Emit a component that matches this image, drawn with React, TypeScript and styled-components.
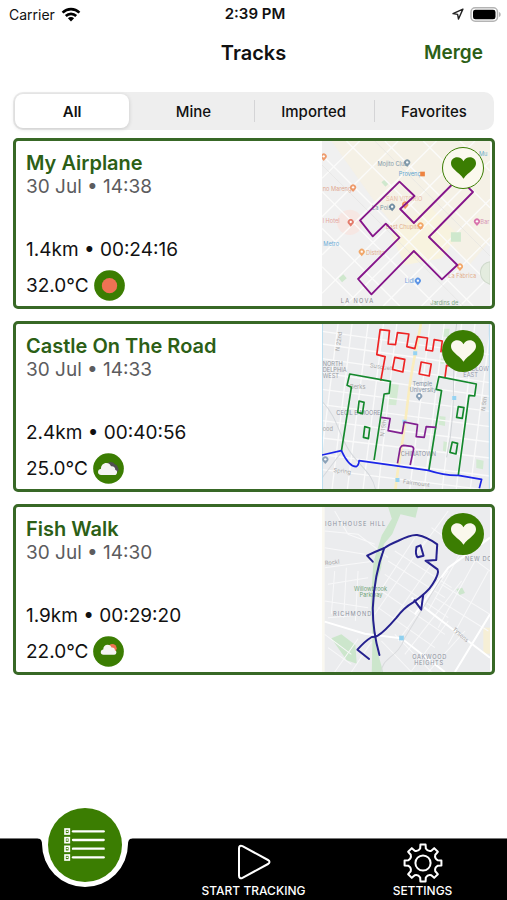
import React, { useState } from "react";
import styled, { createGlobalStyle, css } from "styled-components";

const colors = {
  leaf: "#3b7d02",
  forest: "#2c5f16",
  text: "#111111",
  muted: "#5c5c5e",
  segment: "#eeeeee",
};

const GlobalStyle = createGlobalStyle`
  *, *::before, *::after { box-sizing: border-box; }
  body {
    margin: 0;
    background: #ffffff;
    color: ${colors.text};
    font-family: Inter, "Liberation Sans", sans-serif;
  }
  button { font: inherit; color: inherit; border: 0; padding: 0; background: none; cursor: pointer; }
  a { color: inherit; text-decoration: none; }
  h1, h2, p { margin: 0; }
  svg { display: block; }
`;

const Screen = styled.div`
  display: flex;
  flex-direction: column;
  min-height: 100vh;
`;

const StatusBar = styled.div`
  display: grid;
  grid-template-columns: 1fr auto 1fr;
  align-items: center;
  height: 28px;
  padding: 0 6px 0 9px;
  font-size: 14px;
`;

const StatusGroup = styled.div<{ $end?: boolean }>`
  display: flex;
  align-items: center;
  gap: 6px;
  justify-content: ${(p) => (p.$end ? "flex-end" : "flex-start")};
`;

const Clock = styled.time`
  font-size: 15px;
  line-height: 20px;
  font-weight: 600;
`;

const NavBar = styled.header`
  display: grid;
  grid-template-columns: 1fr auto 1fr;
  align-items: center;
  height: 50px;
  padding: 0 24px;
`;

const NavTitle = styled.h1`
  grid-column: 2;
  font-size: 20px;
  line-height: 24px;
  font-weight: 600;
`;

const NavAction = styled.button`
  justify-self: end;
  font-size: 19px;
  line-height: 24px;
  font-weight: 600;
  color: ${colors.forest};
`;

const Segments = styled.div`
  display: grid;
  grid-template-columns: repeat(4, 1fr);
  margin: 14px 13px 0;
  height: 38px;
  border-radius: 10px;
  background: ${colors.segment};
`;

const Segment = styled.button<{ $active: boolean; $divided: boolean }>`
  position: relative;
  border-radius: 8px;
  font-size: 15px;
  font-weight: 500;
  ${(p) =>
    p.$active &&
    css`
      margin: 2px 4px 2px 2px;
      background: #ffffff;
      font-weight: 600;
      box-shadow: 0 1px 4px rgba(0, 0, 0, 0.16);
    `}
  ${(p) =>
    p.$divided &&
    css`
      &::before {
        content: "";
        position: absolute;
        left: 0;
        top: 8px;
        bottom: 8px;
        width: 1px;
        background: #d4d4d6;
      }
    `}
`;

const TrackList = styled.main`
  display: flex;
  flex-direction: column;
  flex: 1;
  gap: 12px;
  padding: 8px 12px 64px 13px;
`;

const Card = styled.article`
  display: flex;
  border: 3px solid #386826;
  border-radius: 5px;
  padding-right: 2px;
`;

const CardBody = styled.div`
  display: flex;
  flex-direction: column;
  flex: 1;
  padding: 10px 10px 5px;
`;

const TrackName = styled.h2`
  font-size: 20px;
  line-height: 24px;
  font-weight: 600;
  color: ${colors.forest};
`;

const Line = styled.p<{ $muted?: boolean }>`
  font-size: 19px;
  line-height: 24px;
  color: ${(p) => (p.$muted ? colors.muted : colors.text)};
`;

const Metrics = styled.div`
  margin-top: auto;
  display: flex;
  flex-direction: column;
  gap: 8px;
`;

const Weather = styled.div`
  display: flex;
  align-items: center;
  gap: 5px;
`;

const MapFrame = styled.div`
  position: relative;
  flex: 0 0 168px;
  height: 165px;
`;

const MapSvg = styled.svg`
  width: 100%;
  height: 100%;
`;

const Label = styled.text`
  font-family: Inter, "Liberation Sans", sans-serif;
  font-size: 17px;
`;

const FavoriteButton = styled.button<{ $filled: boolean }>`
  position: absolute;
  top: 6px;
  right: 6px;
  display: grid;
  place-items: center;
  width: 42px;
  height: 42px;
  border-radius: 50%;
  color: ${(p) => (p.$filled ? "#faf8ec" : colors.leaf)};
  background: ${(p) => (p.$filled ? colors.leaf : "#fbf9ee")};
  ${(p) => !p.$filled && css`border: 1px solid ${colors.leaf};`}
`;

const TabBar = styled.nav`
  position: sticky;
  bottom: 0;
  display: grid;
  grid-template-columns: repeat(3, 1fr);
  height: 62px;
  background: #000000;
  border-top: 1px solid #777777;
  color: #ffffff;
`;

const Tab = styled.a`
  display: flex;
  flex-direction: column;
  align-items: center;
  justify-content: flex-end;
  padding-bottom: 1px;
  font-size: 12px;
  line-height: 16px;
  font-weight: 500;
`;

const ActiveTab = styled.a`
  position: relative;
  display: flex;
  justify-content: center;
`;

const Notch = styled.svg`
  position: absolute;
  top: -1px;
`;

const ActiveDisc = styled.span`
  position: absolute;
  top: -31px;
  display: grid;
  place-items: center;
  width: 74px;
  height: 74px;
  border-radius: 50%;
  background: ${colors.leaf};
`;

const WifiIcon = () => (
  <svg width="20" height="15" viewBox="0 0 20 15" role="img" aria-label="Wi-Fi">
    <g fill="none" stroke="#000" strokeWidth="2.6">
      <path d="M1.6 5.6a12 12 0 0 1 16.8 0" />
      <path d="M4.8 9a7.4 7.4 0 0 1 10.4 0" />
    </g>
    <path d="M10 14.4 6.9 11.3a4.4 4.4 0 0 1 6.2 0z" fill="#000" />
  </svg>
);

const LocationIcon = () => (
  <svg width="12" height="12" viewBox="0 0 12 12" aria-hidden="true">
    <path d="M10.9 1.1 1 5.6l4.6.8.9 4.6z" fill="none" stroke="#222" strokeWidth="1.4" strokeLinejoin="round" />
  </svg>
);

const BatteryIcon = () => (
  <svg width="31" height="15" viewBox="0 0 31 15" role="img" aria-label="Battery full">
    <rect x="1" y="0.8" width="26.5" height="13.4" rx="4.2" fill="#fff" stroke="#b4b4b4" strokeWidth="1.5" />
    <rect x="3" y="2.7" width="22.5" height="9.6" rx="2.4" fill="#000" />
    <path d="M29 5c1.3.5 1.7 1.4 1.7 2.5S30.3 9.5 29 10z" fill="#b4b4b4" />
  </svg>
);

const HeartIcon = () => (
  <svg width="25" height="22" viewBox="0 0 75 66" aria-hidden="true">
    <path
      d="M37.5 65C31 54 20 48 10 37.5 3.5 31 0 26 0 18.5 0 8 8 .5 18.5.5c8 0 15 4.500 19 12 4-7.500 11-12 19-12C67 .5 75 8 75 18.500c0 7.500-3.500 12.500-10 19C55 48 44 54 37.500 65z"
      fill="currentColor"
    />
  </svg>
);

type Sky = "sunny" | "cloudy" | "partly cloudy";

const Cloud = ({ transform }: { transform?: string }) => (
  <path
    transform={transform}
    d="M25 66c-7 0-10-4-10-9 0-6 4-9 9-10 0-10 7-17 16-17 8 0 12 4 14 10 8-1 13 4 13 11 4 1 6 4 5 8-1 5-3 7-8 7z"
    fill="#f4f4f2"
  />
);

const WeatherIcon = ({ sky }: { sky: Sky }) => (
  <svg width="31" height="31" viewBox="0 0 93 93" role="img" aria-label={sky}>
    <circle cx="46.5" cy="46.5" r="46" fill={colors.leaf} />
    {sky === "sunny" && <circle cx="46.5" cy="47" r="23" fill="#ee7254" />}
    {sky === "cloudy" && (
      <>
        <path d="M44 30c8-5 17-3 21 4 6 1 9 5 9 9 5 5 3 14-5 16l-16-8z" fill="#514f52" />
        <Cloud />
      </>
    )}
    {sky === "partly cloudy" && (
      <>
        <circle cx="58" cy="37" r="13" fill="#ee7254" />
        <Cloud transform="translate(11 2) scale(.82)" />
      </>
    )}
  </svg>
);

const ListIcon = () => (
  <svg width="41" height="34" viewBox="0 0 123 102" aria-hidden="true">
    {[2, 28, 54, 80].map((y) => (
      <g key={y} fill="none" stroke="#fff">
        <rect x="3" y={y + 1} width="13" height="15" strokeWidth="5" />
        <path d={`M7 ${y + 8}h5`} strokeWidth="4" />
        <path d={`M27 ${y + 8}h92`} strokeWidth="7" strokeLinecap="round" />
      </g>
    ))}
  </svg>
);

const PlayIcon = () => (
  <svg width="34" height="40" viewBox="0 0 34 40" aria-hidden="true">
    <path
      d="M2 5.200v27.600c0 2.200 1.600 3 3.500 2L31 21c2-1.100 2-2.900 0-4L5.500 3.200C3.600 2.200 2 3 2 5.200z"
      fill="none"
      stroke="#fff"
      strokeWidth="2"
    />
  </svg>
);

const gearOutline = () => {
  const tooth = [
    [-11, 14.8],
    [-8, 18.6],
    [8, 18.6],
    [11, 14.8],
  ];
  const points: string[] = [];
  for (let i = 0; i < 8; i++) {
    tooth.forEach(([deg, r]) => {
      const a = ((i * 45 + deg - 90) * Math.PI) / 180;
      points.push(`${(20 + r * Math.cos(a)).toFixed(2)} ${(20 + r * Math.sin(a)).toFixed(2)}`);
    });
  }
  const parts = points.map((p, i) => (i === 0 ? `M${p}` : i % 4 === 0 ? `A5 5 0 0 0 ${p}` : `L${p}`));
  return `${parts.join("")}A5 5 0 0 0 ${points[0]}z`;
};

const GearIcon = () => (
  <svg width="40" height="40" viewBox="0 0 40 40" aria-hidden="true">
    <g fill="none" stroke="#fff" strokeWidth="2" strokeLinejoin="round">
      <path d={gearOutline()} />
      <circle cx="20" cy="20" r="7.6" />
    </g>
  </svg>
);

const Pin = ({ x, y, fill }: { x: number; y: number; fill: string }) => (
  <g opacity="0.9">
    <path d={`M${x} ${y + 14}l-6-7a9 9 0 1 1 12 0z`} fill={fill} />
    <circle cx={x} cy={y} r="3.5" fill="#fff" />
  </g>
);

const AirplaneMap = () => (
  <MapSvg viewBox="22 18 503 495" preserveAspectRatio="none" role="img" aria-label="Airplane shaped track">
    <rect x="22" y="18" width="503" height="495" fill="#f0f0f0" />
    <path d="M50 18h475v300l-60 70-130-130-60 60-90-110z" fill="#f5f1e6" />
    <path d="M230 300l110-90 90 90-50 70-110 20z" fill="#f8f3df" />
    <circle cx="105" cy="262" r="38" fill="#f6e7e3" />
    <g stroke="#fbfbfa" strokeWidth="4" fill="none">
      <path d="M22 130 135 18M22 245 250 18M22 360 365 18M22 475 480 18M90 513 525 78M205 513 525 193M320 513 525 308M435 513 525 423" />
      <path d="M22 60 475 513M22 170 365 513M22 280 255 513M22 395 140 513M95 18 525 448M210 18 525 333M325 18 525 218M435 18 525 108" />
    </g>
    <path d="M22 90 445 513M180 18 525 363" stroke="#e4e4e2" strokeWidth="2" fill="none" />
    <path d="M525 380c-30 5-38 40-15 60l15 8z" fill="#e4ecdf" stroke="#cfd9cb" strokeWidth="3" />
    <path
      d="M408 292h30v28h-30zM200 142l8-7 12 12-8 8zM72 430l14-12 10 12-14 12z"
      fill="#cfe8cd"
    />
    <Label x="188" y="92" fill="#8299a8">Mojito Club</Label>
    <Label x="252" y="123" fill="#5ba5d0">Provença</Label>
    <Label x="24" y="167" fill="#dfa890">no Marengo</Label>
    <Label x="214" y="198" fill="#e8bba5">SAN VITORIO</Label>
    <Label x="172" y="225" fill="#8299a8">La Pois</Label>
    <Label x="24" y="264" fill="#e5a59d">l Hotel</Label>
    <Label x="214" y="282" fill="#e3b08f">East Chupitos</Label>
    <Label x="26" y="332" fill="#6badd8">Metro</Label>
    <Label x="154" y="360" fill="#e3b08f">Distrito</Label>
    <Label x="270" y="444" fill="#6f9fdc">Lidl</Label>
    <Label x="400" y="428" fill="#e3b08f">La Fàbrica</Label>
    <Label x="496" y="267" fill="#d796b6">Bar</Label>
    <Label x="492" y="62" fill="#6badc8">Mu</Label>
    <Label x="346" y="509" fill="#7fa883">Jardins de</Label>
    <Label x="78" y="505" fill="#8b8b92" letterSpacing="4">LA NOVA</Label>
    <Pin x={277} y={82} fill="#7893a5" />
    <Pin x={115} y={157} fill="#ee9360" />
    <Pin x={232} y={215} fill="#65839c" />
    <Pin x={271} y={208} fill="#f08a55" />
    <Pin x={108} y={261} fill="#e2705f" />
    <Pin x={317} y={271} fill="#f2a05c" />
    <Pin x={141} y={350} fill="#f2a05c" />
    <Pin x={309} y={437} fill="#4c8be5" />
    <Pin x={435} y={394} fill="#f2a05c" />
    <Pin x={486} y={259} fill="#d768a7" />
    <Pin x={27} y={64} fill="#ee9360" />
    <path d="M316 110h14v14h-14z" fill="#ee8340" />
    <path
      d="M410 150 297 264 256 222 299 183 254 140 136 256 174 304 213 266 254 308 130 432 170 478 297 348 381 433 427 390 342 306 474 171 448 146"
      fill="none"
      stroke="#85158a"
      strokeWidth="5.5"
      strokeLinejoin="round"
    />
  </MapSvg>
);

const CastleMap = () => (
  <MapSvg viewBox="22 18 503 495" preserveAspectRatio="none" role="img" aria-label="Castle shaped track">
    <rect x="22" y="18" width="503" height="495" fill="#ebecee" />
    <path
      d="M228 198l24 2-8 62-24-2zM384 32h20l-2 24h-20zM374 294l18 2-2 28-18-4zM386 370l16 4-4 28-14-4zM484 424l22 4-2 26-20-4zM372 120l18 4-4 14-14-2z"
      fill="#d3ead2"
    />
    <g stroke="#fafafa" strokeWidth="4" fill="none">
      <path d="M22 40l503 70M22 78l503 72M22 122l503 72M22 165l503 70M22 214l503 66M22 260l503 66M22 308l503 64M22 360l503 60M22 455l503 62M22 410l503 64" />
      <path d="M70 18 22 400M112 18 52 513M160 18 98 513M206 18 145 513M246 18 190 513M345 18 285 513M388 18 328 513M440 18 382 513M480 18 424 513M525 40 466 513" />
    </g>
    <path d="M22 250c50 50 50 110 90 160s60 60 70 103M22 480l60-80" stroke="#d5d8dc" strokeWidth="3" fill="none" />
    <path d="M425 18c-20 150 5 240-30 400" stroke="#d0d3d7" strokeWidth="3" fill="none" />
    <path d="M318 18c-10 60-25 120-34 190s-14 120-24 180-14 90-18 125" stroke="#faedbe" strokeWidth="8" fill="none" />
    <path d="M23 18v495M523 18v495" stroke="#b5dcef" strokeWidth="3" />
    <path
      d="M295 100h12v12h-12zM412 234h12v12h-12zM263 305h12v12h-12zM242 480h12v12h-12z"
      fill="#96d3f2"
    />
    <Label x="24" y="144" fill="#969ba4">NORTH</Label>
    <Label x="24" y="162" fill="#969ba4">DELPHIA</Label>
    <Label x="24" y="180" fill="#969ba4">WEST</Label>
    <Label x="65" y="290" fill="#8f94a2">CECIL B MOORE</Label>
    <Label x="258" y="414" fill="#8f94a2">CHINATOWN</Label>
    <Label x="448" y="158" fill="#9499ac">LUDLOW</Label>
    <Label x="445" y="176" fill="#9499ac">EAST</Label>
    <Label x="293" y="204" fill="#8795a5">Temple</Label>
    <Label x="284" y="222" fill="#8795a5">University</Label>
    <Label x="165" y="148" fill="#a5a5a5" transform="rotate(8 165 148)">Susqueh</Label>
    <Label x="106" y="214" fill="#a5a5a5">Berks</Label>
    <Label x="56" y="462" fill="#a5a5a5" transform="rotate(7 56 462)">Spring</Label>
    <Label x="264" y="496" fill="#a5a5a5" transform="rotate(8 264 496)">Fairmount</Label>
    <Label x="24" y="338" fill="#a5a5a5">ood</Label>
    <Label x="74" y="100" fill="#a5a5a5" transform="rotate(-82 74 100)">N 22nd</Label>
    <Label x="510" y="280" fill="#a5a5a5" transform="rotate(-82 510 280)">N 5th</Label>
    <Label x="208" y="356" fill="#a5a5a5" transform="rotate(-82 208 356)">N 15th</Label>
    <Pin x={313} y={234} fill="#8099b1" />
    <Pin x={32} y={424} fill="#8099b1" />
    <g fill="none" strokeWidth="5" strokeLinejoin="round">
      <path
        d="M198 188l13-72-25-6 10-75 28 3-4 40 22 2 6-36 34 4-6 38 24 6 8-36 30 4-5 36 20 3 5-34 24 4-4 34M390 180l5-38 15 2M240 118l30 6-6 38-31-8zM319 132l30 6-6 36-30-6z"
        stroke="#ee2323"
      />
      <path
        d="M80 400l30-192-13-6 8-34 122 22-4 36-15 2-30 198M342 456l38-238-16-4 8-38 112 22-5 36-17-2-32 240M133 249l15 4-5 34-14-4zM150 326l15 4-4 32-15-4zM430 266l17 3-5 32-17-3zM412 372l16 4-5 32-18-5z"
        stroke="#14882c"
      />
      <path
        d="M198 298l28 4-6 36 42 8 6-34 40 8-4 36 24 2 6-32 30 2M248 436l8-46q4-8 10-8l24 3q8 3 6 10l-10 46"
        stroke="#812090"
      />
      <path d="M22 411l58-13q22 48 44 48 8-3 9-18l102 14 105 15q50 16 90 15l70 12-7 27" stroke="#1b25e8" />
    </g>
  </MapSvg>
);

const FishMap = () => (
  <MapSvg viewBox="22 18 503 495" preserveAspectRatio="none" role="img" aria-label="Fish shaped track">
    <rect x="22" y="18" width="503" height="495" fill="#ebecee" />
    <rect x="22" y="18" width="8" height="495" fill="#faf8f0" />
    <path d="M505 380h20v78h-20z" fill="#f6efd6" />
    <path
      d="M220 18h90l-8 32-45-10-25 60-25 30-8 70-18 60-4 100 8 80 20 73h-34l2-100-5-110 8-120 25-80 30-50zM50 412l30-12 42 32 4 56-30-10zM424 264l18-4 8 16-16 6z"
      fill="#cce6cc"
    />
    <g stroke="#f8f8f9" strokeWidth="3" fill="none">
      <path d="M30 90l100 10 90 70M30 140l120 20M60 30l40 70 80 30M30 200l150-20M40 250l120-20M30 300l130 20M40 350l120-10M60 210l-10 130M95 200l-8 150M130 210l-8 150" />
      <path d="M220 180l170 110M210 220l190 130M200 270l190 130M190 320l170 120M240 150l170 110M330 120l-150 220M370 160l-160 230M400 210l-150 210M440 240l-170 220M300 110l-110 170" />
      <path d="M350 80l175 130M400 30l-80 110M440 150l-100 180M480 180l-110 200M520 210l-120 220M380 250l145 90M360 290l160 100M200 420l90 93M240 400l110 113M400 360l-110 150M450 390l-110 123" />
      <path d="M60 513l70-100M110 513l60-90M30 400l80 60M40 440l70 50" />
    </g>
    <g stroke="#fff" strokeWidth="6" fill="none">
      <path d="M30 362l120 36 110 14 130 101M290 290l130 100 105 80M525 340 420 513M525 110 400 200 300 340" />
    </g>
    <path d="M270 410c-20 60-70 60-70 103M270 410l110-180" stroke="#d9dadd" strokeWidth="3" fill="none" />
    <Label x="31" y="74" fill="#8c929e" letterSpacing="3">IGHTHOUSE HILL</Label>
    <Label x="450" y="180" fill="#8c929e" letterSpacing="2">NEW DO</Label>
    <Label x="55" y="344" fill="#8c929e" letterSpacing="3">RICHMOND</Label>
    <Label x="292" y="474" fill="#8c929e" letterSpacing="2">OAKWOOD</Label>
    <Label x="298" y="492" fill="#8c929e" letterSpacing="2">HEIGHTS</Label>
    <Label x="118" y="270" fill="#6fa379">Willowbrook</Label>
    <Label x="134" y="288" fill="#6fa379">Parkway</Label>
    <Label x="31" y="192" fill="#a5a5a5" transform="rotate(-6 31 192)">Rockl</Label>
    <Label x="412" y="386" fill="#a5a5a5" transform="rotate(42 412 386)">Tysens</Label>
    <path d="M253 404h14v14h-14z" fill="#8fd0ef" />
    <g fill="none" stroke="#25218e" strokeWidth="6" strokeLinejoin="round" strokeLinecap="round">
      <path d="M174 182 157 164q24-12 52-23 10-8 40-21 40-20 58-18 30 6 60 28l-3 47-32 2 36 26q6 12-15 45-14 24-58 54-28 16-50 46-38 44-56 54-6 4-18 4-20 12-43 38l35 28" />
      <path d="M208 142q-30 80-34 180 0 70 20 140" />
      <path d="M299 298l20 28 6-44M305 138l12-5 9 31-17 5q-9-6-4-31z" />
    </g>
  </MapSvg>
);

const tracks: {
  name: string;
  date: string;
  stats: string;
  temp: string;
  sky: Sky;
  filled: boolean;
  Map: React.ComponentType;
}[] = [
  { name: "My Airplane", date: "30 Jul • 14:38", stats: "1.4km • 00:24:16", temp: "32.0°C", sky: "sunny", filled: false, Map: AirplaneMap },
  { name: "Castle On The Road", date: "30 Jul • 14:33", stats: "2.4km • 00:40:56", temp: "25.0°C", sky: "cloudy", filled: true, Map: CastleMap },
  { name: "Fish Walk", date: "30 Jul • 14:30", stats: "1.9km • 00:29:20", temp: "22.0°C", sky: "partly cloudy", filled: true, Map: FishMap },
];

const filters = ["All", "Mine", "Imported", "Favorites"];

export default function App() {
  const [active, setActive] = useState(0);
  return (
    <Screen>
      <GlobalStyle />
      <StatusBar>
        <StatusGroup>
          <span>Carrier</span>
          <WifiIcon />
        </StatusGroup>
        <Clock>2:39 PM</Clock>
        <StatusGroup $end>
          <LocationIcon />
          <BatteryIcon />
        </StatusGroup>
      </StatusBar>
      <NavBar>
        <NavTitle>Tracks</NavTitle>
        <NavAction type="button">Merge</NavAction>
      </NavBar>
      <Segments role="group" aria-label="Filter tracks">
        {filters.map((label, i) => (
          <Segment
            key={label}
            type="button"
            aria-pressed={i === active}
            $active={i === active}
            $divided={i > 0 && i !== active && i !== active + 1}
            onClick={() => setActive(i)}
          >
            {label}
          </Segment>
        ))}
      </Segments>
      <TrackList>
        {tracks.map(({ name, date, stats, temp, sky, filled, Map }) => (
          <Card key={name}>
            <CardBody>
              <TrackName>{name}</TrackName>
              <Line $muted>{date}</Line>
              <Metrics>
                <Line>{stats}</Line>
                <Weather>
                  <Line>{temp}</Line>
                  <WeatherIcon sky={sky} />
                </Weather>
              </Metrics>
            </CardBody>
            <MapFrame>
              <Map />
              <FavoriteButton type="button" $filled={filled} aria-label={`Favorite ${name}`}>
                <HeartIcon />
              </FavoriteButton>
            </MapFrame>
          </Card>
        ))}
      </TrackList>
      <TabBar>
        <ActiveTab href="#tracks" aria-label="Tracks" aria-current="page">
          <Notch width="98" height="50" viewBox="0 0 98 50" aria-hidden="true">
            <path d="M0 0C4 0 6 2 6 6a43 43 0 0 0 86 0c0-4 2-6 6-6z" fill="#fff" />
          </Notch>
          <ActiveDisc>
            <ListIcon />
          </ActiveDisc>
        </ActiveTab>
        <Tab href="#start">
          <PlayIcon />
          START TRACKING
        </Tab>
        <Tab href="#settings">
          <GearIcon />
          SETTINGS
        </Tab>
      </TabBar>
    </Screen>
  );
}
